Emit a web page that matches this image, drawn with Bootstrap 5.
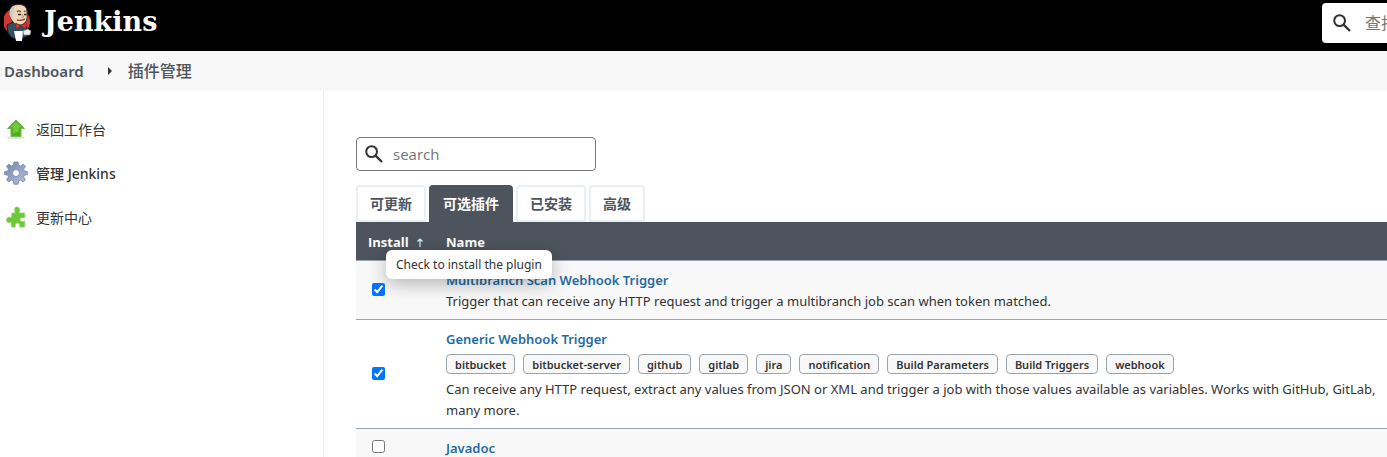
<!DOCTYPE html>
<html lang="zh-CN">
<head>
<meta charset="utf-8">
<meta name="viewport" content="width=device-width, initial-scale=1">
<title>插件管理 [Jenkins]</title>
<link href="https://cdn.jsdelivr.net/npm/bootstrap@5.3.0/dist/css/bootstrap.min.css" rel="stylesheet">
<style>
  :root { --ink: #333; --slate: #4d545d; --rule: #98a5ae; --link: #1f6ba3; --soft: #f8f8f8; }
  html { overflow: hidden; }
  body { font-family: "Noto Sans", "Noto Sans CJK SC", sans-serif; font-size: 13px; line-height: 21px; color: var(--ink); overflow: hidden; }
  a { text-decoration: none; color: inherit; }
  .top-bar { height: 51px; background: #000; }
  .brand-name { font: bold 27px/44px "DejaVu Serif", serif; color: #fff; }
  .top-search { flex: 0 0 260px; height: 40px; margin: 3px -195px 0 0; background: #fff; border-radius: 4px; }
  .top-search input, .filter-box input { border: 0; outline: 0; background: transparent; min-width: 0; color: var(--ink); }
  .top-search input { width: 200px; padding: 0; font-size: 16px; }
  .top-search svg { margin: 0 14px 0 11px; }
  ::placeholder { color: #757575; opacity: 1; }
  .crumbs { height: 40px; background: var(--soft); font-size: 15px; font-weight: 600; color: var(--slate); }
  .crumbs svg { margin: 0 16px 0 24px; }
  .crumbs .here { font-size: 16px; font-weight: 500; }
  .side-panel { flex: 0 0 324px; border-right: 1px solid #eaeff2; padding-top: 24px; min-height: calc(100vh - 91px); }
  .task { height: 28px; font-size: 14px; }
  .task.latin { font-weight: 500; }
  .main-panel { flex: 1 1 0; min-width: 0; padding: 46px 0 0 32px; }
  .filter-box { width: 240px; height: 34px; border: 1px solid #777; border-radius: 4px; }
  .filter-box input { font-family: "Open Sans", sans-serif; font-size: 15px; }
  .tabs { gap: 3px; height: 37px; margin-top: 14px; }
  .tabs a { height: 37px; padding: 0 12px; border: 2px solid #eaeff2; border-radius: 4px 4px 0 0; line-height: 34px; font-size: 14px; font-weight: 700; color: var(--slate); }
  .tabs a.active { background: var(--slate); border-color: var(--slate); color: #fff; }
  .plugins { width: 100%; }
  .plugins th { height: 38px; background: var(--slate); color: #fff; font-family: "Open Sans", sans-serif; font-weight: 700; padding: 4px 0 0 12px; }
  .plugins td { padding: 9px 0 7px 12px; white-space: nowrap; vertical-align: middle; }
  .plugins tr { border-bottom: 1px solid var(--rule); }
  .plugins tbody tr:nth-child(odd) { background: var(--soft); }
  .plugins .pick { width: 78px; padding: 7px 0 8px 16px; }
  .plugins input { display: block; width: 13px; height: 13px; margin: 0; }
  .plugin-name { font-weight: 600; color: var(--link); }
  .tags { gap: 8px; padding: 4px 0 5px; }
  .tags a { height: 20px; padding: 0 8px; border: 1px solid var(--rule); border-radius: 4px; background: var(--soft); font-size: 11px; font-weight: 600; line-height: 20px; }
  .hint { left: 30px; top: 28px; padding: 4px 10px; border-radius: 6px; background: #fff; color: var(--ink); font-family: "Noto Sans", sans-serif; font-size: 12px; font-weight: 400; white-space: nowrap; box-shadow: 0 5px 18px rgba(0,0,0,.28); z-index: 2; }
</style>
</head>
<body>
<svg width="0" height="0" class="position-absolute">
  <symbol id="lens" viewBox="0 0 18 18"><circle cx="6.6" cy="6.6" r="5.4" fill="none" stroke="#333" stroke-width="2"/><path d="M10.6 10.6 17 17" stroke="#333" stroke-width="2.4"/></symbol>
</svg>

<header class="top-bar d-flex overflow-hidden">
  <a href="#" class="d-flex me-auto gap-2 ps-1">
    <svg width="32" height="44" viewBox="1 0 32 44" aria-hidden="true">
      <circle cx="13.500" cy="21.500" r="13.500" fill="#d33833"/>
      <path d="M4 25 10 22 21 24 24 28 24 36 18 39 9 38 5 33Z" fill="#335061" stroke="#10202b"/>
      <path d="M7 14C6 7 11 4.500 16 4.500 22 4.500 25 8 24 15 25 21 21 25 17 25 11 25 8 21 7 14Z" fill="#f0d6b7" stroke="#3a302a"/>
      <path d="M6.500 15C6 9 9 5 14 5 10 8 11 11 10 16L9 20Z" fill="#d0ccc6"/>
      <path d="M14 12Q16 10 18 12M21 12Q22 10 24 12" fill="none" stroke="#6d5346" stroke-width="1.200"/>
      <path d="M15 14.500h3M21 14.500h2.500" stroke="#352b27" stroke-width="1.400"/>
      <path d="M19 14 20.500 17 18.500 17.500" fill="none" stroke="#b88d70"/>
      <path d="M14 20Q18 21 22 19" fill="none" stroke="#805246" stroke-width="1.400"/>
      <path d="M13 23 18 26 13 29ZM18 26 23 22 23 29Z" fill="#d33833" stroke="#64201e" stroke-width=".500"/>
      <path d="M11 31h9l-1 10h-6Z" fill="#fff"/><path d="M20 31 25 29 28 31 27 35 21 35Z" fill="#eee" stroke="#888" stroke-width=".600"/>
    </svg>
    <span class="brand-name">Jenkins</span>
  </a>
  <form class="top-search d-flex align-items-center" role="search">
    <svg width="18" height="18" class="flex-shrink-0"><use href="#lens"/></svg>
    <input type="search" placeholder="查找" aria-label="查找">
  </form>
</header>

<nav class="crumbs d-flex align-items-center ps-1" aria-label="breadcrumb">
  <a href="#">Dashboard</a>
  <svg width="4" height="8" viewBox="0 0 4 8" aria-hidden="true"><path d="M0 0 4 4 0 8Z" fill="#333"/></svg>
  <a href="#" class="here">插件管理</a>
</nav>

<div class="d-flex">
  <aside class="side-panel d-flex flex-column gap-3 ps-1">
    <a href="#" class="task d-flex align-items-center gap-2">
      <svg width="24" height="24" viewBox="0 0 24 24"><ellipse cx="12" cy="20.500" rx="9" ry="1.500" fill="#ddd"/><path d="M12 3 20.500 11.500H17V19.500H7V11.500H3.500Z" fill="#4fae18" stroke="#7ab85a"/><path d="M12 4.500 18 10.500H15V14.500L9 16.500V10.500H6Z" fill="#74c63a"/></svg>
      <span>返回工作台</span></a>
    <a href="#" class="task latin d-flex align-items-center gap-2">
      <svg width="24" height="24" viewBox="0 0 24 24"><defs><linearGradient id="steel" y2="1"><stop stop-color="#6f85b2"/><stop offset="1" stop-color="#b9c3d8"/></linearGradient></defs><path fill="url(#steel)" stroke="#7483a5" stroke-width=".8" d="M10 1h4l.6 3.200 2 .8L19.300 3.200 21.500 5.500 19.500 8.200 20.300 10 23.300 10.500V13.500L20.300 14.200 19.500 16 21.500 18.800 19.300 21 16.600 19.100 14.600 20 14 23.200H10L9.400 20 7.400 19.100 4.700 21 2.500 18.800 4.500 16 3.700 14.200.7 13.500V10.500L3.700 10 4.500 8.200 2.500 5.500 4.700 3.200 7.400 5 9.400 4.200Z"/><circle cx="12" cy="12" r="3.500" fill="#fff" stroke="#8290b1"/></svg>
      <span>管理 Jenkins</span></a>
    <a href="#" class="task d-flex align-items-center gap-2">
      <svg width="24" height="24" viewBox="0 0 24 24"><path d="M8 8H11.500C10 5 10.500 2 13 2s3.500 3 2 6h5.500v5c-2-1-4.500-1-4.500 1.500s2.500 2.500 4.500 1.500v6H15.500c1-2 0-4-2-4s-3 2-2 4H7.500V17C5.500 18 2.500 18 2.500 15s3-3.500 5-2Z" fill="#6bc936" stroke="#8ccb68" stroke-width=".8"/></svg>
      <span>更新中心</span></a>
  </aside>

  <main class="main-panel">
    <div class="filter-box d-flex align-items-center">
      <svg width="18" height="18" class="flex-shrink-0 mx-2"><use href="#lens"/></svg>
      <input type="search" placeholder="search" aria-label="search">
    </div>
    <nav class="tabs d-flex">
      <a href="#">可更新</a><a href="#" class="active">可选插件</a><a href="#">已安装</a><a href="#">高级</a>
    </nav>
    <table class="plugins">
      <thead><tr>
        <th class="position-relative"><a href="#" class="d-flex gap-2"><span>Install</span><svg width="6" height="21" viewBox="0 0 6 21" aria-hidden="true"><path d="M3 15V7M.5 9.500 3 7 5.500 9.500" fill="none" stroke="#cdf3ff" stroke-width="1.200"/></svg></a><div class="hint position-absolute" role="tooltip">Check to install the plugin</div></th>
        <th><a href="#">Name</a></th>
      </tr></thead>
      <tbody>
        <tr>
          <td class="pick"><input type="checkbox" checked aria-label="Multibranch Scan Webhook Trigger"></td>
          <td><a href="#" class="plugin-name">Multibranch Scan Webhook Trigger</a><div>Trigger that can receive any HTTP request and trigger a multibranch job scan when token matched.</div></td>
        </tr>
        <tr>
          <td class="pick"><input type="checkbox" checked aria-label="Generic Webhook Trigger"></td>
          <td><a href="#" class="plugin-name">Generic Webhook Trigger</a>
            <div class="tags d-flex"><a href="#">bitbucket</a><a href="#">bitbucket-server</a><a href="#">github</a><a href="#">gitlab</a><a href="#">jira</a><a href="#">notification</a><a href="#">Build Parameters</a><a href="#">Build Triggers</a><a href="#">webhook</a></div>
            <div>Can receive any HTTP request, extract any values from JSON or XML and trigger a job with those values available as variables. Works with GitHub, GitLab,<br>many more.</div></td>
        </tr>
        <tr>
          <td class="pick"><input type="checkbox" aria-label="Javadoc"></td>
          <td><a href="#" class="plugin-name">Javadoc</a></td>
        </tr>
      </tbody>
    </table>
  </main>
</div>
<script src="https://cdn.jsdelivr.net/npm/bootstrap@5.3.0/dist/js/bootstrap.bundle.min.js"></script>
</body>
</html>
